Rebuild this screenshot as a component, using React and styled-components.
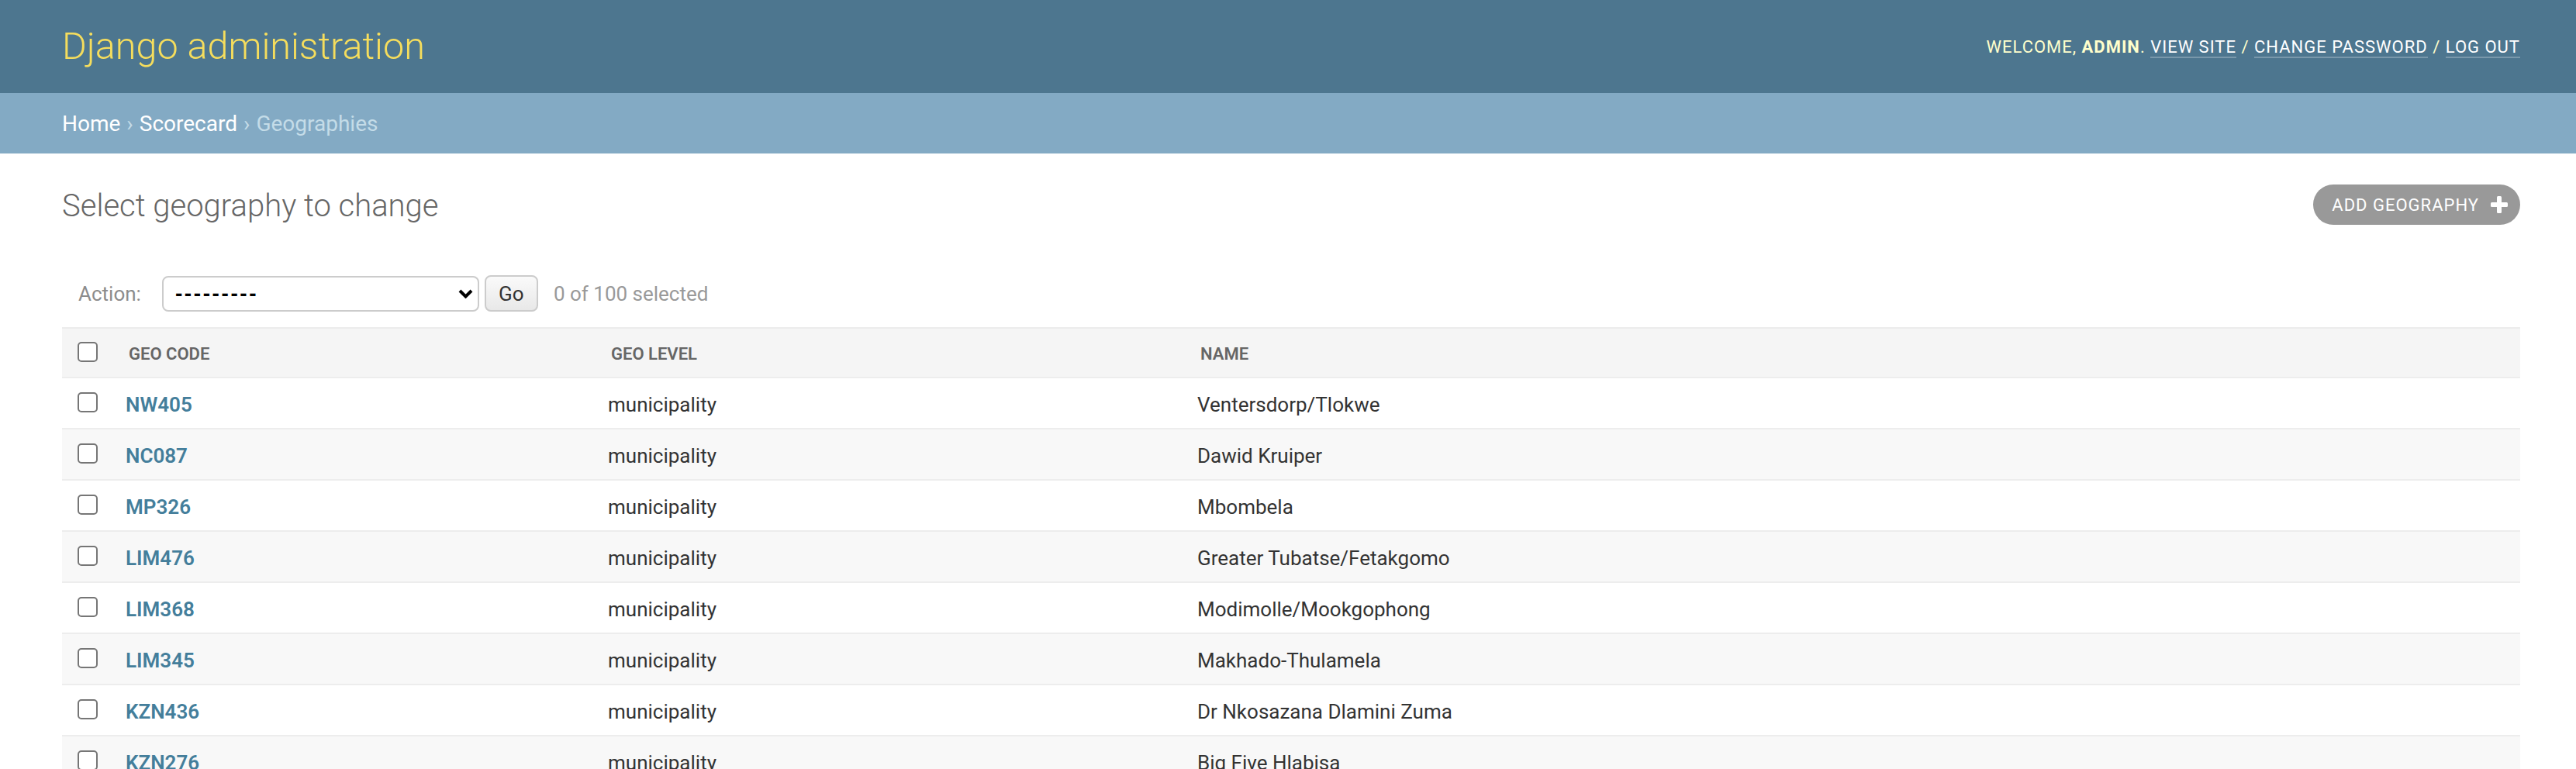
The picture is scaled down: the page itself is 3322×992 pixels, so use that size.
import React from 'react';
import styled, { createGlobalStyle } from 'styled-components';

const rows = [
  ['NW405', 'municipality', 'Ventersdorp/Tlokwe'],
  ['NC087', 'municipality', 'Dawid Kruiper'],
  ['MP326', 'municipality', 'Mbombela'],
  ['LIM476', 'municipality', 'Greater Tubatse/Fetakgomo'],
  ['LIM368', 'municipality', 'Modimolle/Mookgophong'],
  ['LIM345', 'municipality', 'Makhado-Thulamela'],
  ['KZN436', 'municipality', 'Dr Nkosazana Dlamini Zuma'],
  ['KZN276', 'municipality', 'Big Five Hlabisa'],
  ['KZN285', 'municipality', 'Mthonjaneni'],
];

const GlobalStyle = createGlobalStyle`
  html, body {
    margin: 0;
    padding: 0;
    overflow: hidden;
    background: #fff;
  }
  body {
    font-family: Roboto, 'Liberation Sans', sans-serif;
    color: #333;
  }
`;

const App = () => {
  return (
    <Page>
      <GlobalStyle />
      <Header>
        <Branding>Django administration</Branding>
        <UserTools>
          WELCOME, <strong>ADMIN</strong>. <ToolLink href="#">VIEW SITE</ToolLink> /{' '}
          <ToolLink href="#">CHANGE PASSWORD</ToolLink> / <ToolLink href="#">LOG OUT</ToolLink>
        </UserTools>
      </Header>

      <Breadcrumbs>
        <Crumb href="#">Home</Crumb>
        <Sep>›</Sep>
        <Crumb href="#">Scorecard</Crumb>
        <Sep>›</Sep>
        Geographies
      </Breadcrumbs>

      <Content>
        <TitleRow>
          <Title>Select geography to change</Title>
          <AddButton href="#">
            ADD GEOGRAPHY
            <svg width="22" height="22" viewBox="0 0 22 22">
              <rect x="8" y="0" width="6" height="22" rx="1.5" fill="#fff" />
              <rect x="0" y="8" width="22" height="6" rx="1.5" fill="#fff" />
            </svg>
          </AddButton>
        </TitleRow>

        <ActionBar>
          <ActionLabel>Action:</ActionLabel>
          <SelectWrap>
            <Select defaultValue="">
              <option value="">---------</option>
              <option value="delete">Delete selected geographies</option>
            </Select>
            <Chevron width="19" height="12" viewBox="0 0 19 12">
              <polyline points="2,2 9.5,9.5 17,2" fill="none" stroke="#000" strokeWidth="4" />
            </Chevron>
          </SelectWrap>
          <GoButton type="button">Go</GoButton>
          <Counter>0 of 100 selected</Counter>
        </ActionBar>

        <Table>
          <Row $head>
            <CheckCell><Checkbox type="checkbox" /></CheckCell>
            <HeadLabel>Geo code</HeadLabel>
            <HeadLabel>Geo level</HeadLabel>
            <HeadLabel>Name</HeadLabel>
          </Row>
          {rows.map(([code, level, name], i) => (
            <Row key={code} $alt={i % 2 === 1}>
              <CheckCell><Checkbox type="checkbox" /></CheckCell>
              <Cell><CodeLink href="#">{code}</CodeLink></Cell>
              <Cell>{level}</Cell>
              <Cell>{name}</Cell>
            </Row>
          ))}
        </Table>
      </Content>
    </Page>
  );
};

export default App;

const Page = styled.div`
  width: 100%;
  height: 992px;
  overflow: hidden;
`;

const Header = styled.header`
  height: 120px;
  box-sizing: border-box;
  padding: 0 72px 0 80px;
  display: flex;
  align-items: center;
  justify-content: space-between;
  background: #4d768f;
`;

const Branding = styled.h1`
  margin: 0;
  font-size: 48.5px;
  font-weight: 300;
  color: #f5dd5d;
  line-height: 56px;
`;

const UserTools = styled.div`
  font-size: 22px;
  letter-spacing: 1px;
  color: #ffc;
  font-weight: 400;

  strong {
    font-weight: 700;
  }
`;

const ToolLink = styled.a`
  color: #fff;
  text-decoration: none;
  border-bottom: 2px solid rgba(255, 255, 255, 0.25);
`;

const Breadcrumbs = styled.nav`
  height: 78px;
  box-sizing: border-box;
  padding: 0 80px;
  display: flex;
  align-items: center;
  background: #83aac4;
  color: #c4dce8;
  font-size: 28px;
`;

const Crumb = styled.a`
  color: #fff;
  text-decoration: none;
`;

const Sep = styled.span`
  margin: 0 8px;
`;

const Content = styled.main`
  padding: 40px 72px 0 80px;
`;

const TitleRow = styled.div`
  display: flex;
  justify-content: space-between;
  align-items: flex-start;
  height: 52px;
`;

const Title = styled.h1`
  margin: 4px 0 0;
  font-size: 40px;
  line-height: 48px;
  font-weight: 300;
  color: #666;
`;

const AddButton = styled.a`
  display: flex;
  align-items: center;
  gap: 15px;
  height: 52px;
  box-sizing: border-box;
  padding: 0 16px 0 24px;
  border-radius: 30px;
  background: #999;
  color: #fff;
  font-size: 22px;
  letter-spacing: 1px;
  text-decoration: none;
`;

const ActionBar = styled.div`
  display: flex;
  align-items: center;
  height: 47px;
  margin: 65px 0 20px;
  padding-left: 21px;
`;

const ActionLabel = styled.label`
  font-size: 26px;
  color: #8c8c8c;
  margin-right: 27px;
`;

const SelectWrap = styled.div`
  position: relative;
  margin-right: 7px;
`;

const Select = styled.select`
  appearance: none;
  width: 409px;
  height: 46px;
  box-sizing: border-box;
  padding: 0 40px 0 15px;
  border: 2px solid #ccc;
  border-radius: 8px;
  background: #fff;
  font-family: 'Liberation Sans', Arial, sans-serif;
  font-size: 28px;
  font-weight: 700;
  letter-spacing: 2.6px;
  color: #000;
`;

const Chevron = styled.svg`
  position: absolute;
  right: 8px;
  top: 50%;
  transform: translateY(-50%);
  pointer-events: none;
`;

const GoButton = styled.button`
  width: 69px;
  height: 47px;
  box-sizing: border-box;
  border: 2px solid #ccc;
  border-radius: 8px;
  background: linear-gradient(#fafafa, #e8e8e8);
  font-family: Roboto, sans-serif;
  font-size: 26px;
  color: #333;
  padding: 0;
  margin-right: 20px;
`;

const Counter = styled.span`
  font-size: 26px;
  color: #999;
`;

const Table = styled.div`
  display: flex;
  flex-direction: column;
`;

const Row = styled.div`
  display: grid;
  grid-template-columns: 66px 622px 760px 1fr;
  align-items: center;
  height: 66px;
  box-sizing: border-box;
  border-bottom: 2px solid #ededed;
  border-top: ${(p) => (p.$head ? '2px solid #ececec' : 'none')};
  background: ${(p) => (p.$head ? '#f5f5f5' : p.$alt ? '#f8f8f8' : '#fff')};
`;

const CheckCell = styled.div`
  display: flex;
  align-items: center;
  padding-left: 20px;
  margin-top: -2px;
`;

const Checkbox = styled.input`
  appearance: none;
  margin: 0;
  width: 26px;
  height: 26px;
  box-sizing: border-box;
  border: 2px solid #767676;
  border-radius: 5px;
  background: #fff;
`;

const HeadLabel = styled.div`
  padding: 2px 0 0 20px;
  font-size: 22px;
  font-weight: 600;
  color: #666;
  text-transform: uppercase;
`;

const Cell = styled.div`
  padding: 3px 0 0 16px;
  font-size: 26px;
  color: #333;
`;

const CodeLink = styled.a`
  color: #447e9b;
  font-weight: 600;
  text-decoration: none;
`;
